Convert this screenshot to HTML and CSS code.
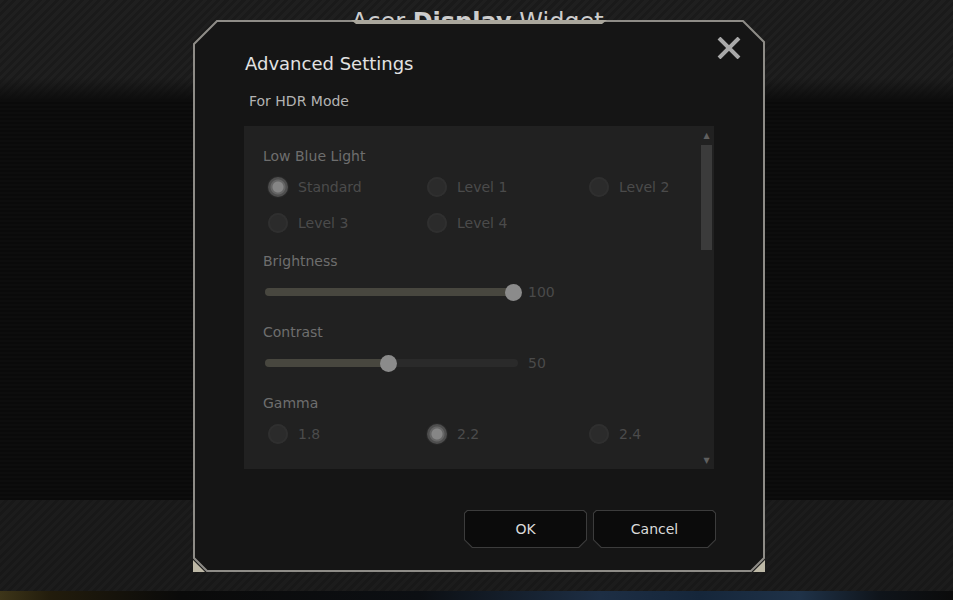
FILE: index.html
```html
<!DOCTYPE html>
<html lang="en">
<head>
<meta charset="utf-8">
<title>Acer Display Widget</title>
<link rel="stylesheet" href="styles.css">
</head>
<body>
<div class="app">
  <header class="topbar">
    <h1 class="app-title">Acer <b>Display</b> Widget</h1>
  </header>
  <main class="stage"></main>
  <div class="band"></div>
  <div class="strip"></div>

  <section class="dialog" role="dialog" aria-label="Advanced Settings">
    <svg class="dialog-frame" width="572" height="552" viewBox="0 0 572 552" aria-hidden="true">
      <polygon points="1,24 24,1 550,1 571,22 571,538 558,551 14,551 1,538" fill="#151515" stroke="#8e8c87" stroke-width="2"/>
      <polygon points="158,0 414,0 409,4 163,4" fill="#a9a69c"/>
      <polygon points="0,540 12,552 0,552" fill="#bdb8a6"/>
      <polygon points="572,540 560,552 572,552" fill="#bdb8a6"/>
    </svg>
    <button class="close" aria-label="Close">
      <svg width="24" height="22" viewBox="0 0 24 22"><path d="M2 1 L22 21 M22 1 L2 21" stroke="#a9a9a9" stroke-width="4" fill="none"/></svg>
    </button>
    <div class="dialog-body">
      <h2 class="dialog-title">Advanced Settings</h2>
      <p class="dialog-sub">For HDR Mode</p>
      <div class="panel">
        <div class="panel-content">
          <div class="group group--radio">
            <div class="group-label">Low Blue Light</div>
            <div class="radio-grid">
              <div class="option"><span class="radio is-on"></span>Standard</div>
              <div class="option"><span class="radio"></span>Level 1</div>
              <div class="option"><span class="radio"></span>Level 2</div>
              <div class="option"><span class="radio"></span>Level 3</div>
              <div class="option"><span class="radio"></span>Level 4</div>
            </div>
          </div>
          <div class="group group--slider">
            <div class="group-label">Brightness</div>
            <div class="slider-row">
              <div class="track"><div class="track-fill" style="width:248px"></div><span class="thumb" style="left:248px"></span></div>
              <span class="value">100</span>
            </div>
          </div>
          <div class="group group--slider">
            <div class="group-label">Contrast</div>
            <div class="slider-row">
              <div class="track"><div class="track-fill" style="width:123px"></div><span class="thumb" style="left:123px"></span></div>
              <span class="value">50</span>
            </div>
          </div>
          <div class="group group--radio">
            <div class="group-label">Gamma</div>
            <div class="radio-grid">
              <div class="option"><span class="radio"></span>1.8</div>
              <div class="option"><span class="radio is-on"></span>2.2</div>
              <div class="option"><span class="radio"></span>2.4</div>
            </div>
          </div>
        </div>
        <div class="scrollbar">
          <span class="scroll-arrow">&#9650;</span>
          <span class="scroll-thumb"></span>
          <span class="scroll-space"></span>
          <span class="scroll-arrow scroll-arrow--down">&#9660;</span>
        </div>
      </div>
      <div class="actions">
        <button class="btn"><span class="btn-face">OK</span></button>
        <button class="btn"><span class="btn-face">Cancel</span></button>
      </div>
    </div>
  </section>
</div>
</body>
</html>
```

FILE: styles.css
```css
* { box-sizing: border-box; margin: 0; padding: 0; }

html, body {
  width: 953px;
  height: 600px;
  overflow: hidden;
}

body {
  background: #0c0c0c;
  font-family: "DejaVu Sans", "Liberation Sans", sans-serif;
}

.app {
  position: relative;
  width: 953px;
  height: 600px;
  display: flex;
  flex-direction: column;
}

.topbar {
  height: 100px;
  flex: none;
  display: flex;
  justify-content: center;
  padding-top: 8px;
  background:
    linear-gradient(to bottom, rgba(12,12,12,0) 0, rgba(12,12,12,0) 78px, #0b0b0b 102px),
    repeating-linear-gradient(135deg, #1f1f1f 0 3px, #1a1a1a 3px 6px);
}

.app-title {
  font-size: 24px;
  line-height: 28px;
  font-weight: normal;
  color: #cdcdcd;
  margin-left: 2px;
}

.app-title b { font-weight: bold; }

.stage {
  flex: 1;
  background: repeating-linear-gradient(to bottom, #0d0d0d 0 2px, #0a0a0a 2px 4px);
}

.band {
  height: 91px;
  flex: none;
  background: repeating-linear-gradient(135deg, #1c1c1c 0 3px, #181818 3px 6px);
}

.strip {
  height: 9px;
  flex: none;
  background: linear-gradient(90deg, #3d3519 0, #221c0c 50px, #0a0a0a 180px, #0c0f13 420px, #1d2e44 600px, #15263a 700px, #1f3248 800px, #0f141a 880px, #0b0b0b 953px);
}

/* dialog overlay */
.dialog {
  position: absolute;
  left: 193px;
  top: 20px;
  width: 572px;
  height: 552px;
}

.dialog-frame {
  position: absolute;
  left: 0;
  top: 0;
}

.close {
  position: absolute;
  left: 524px;
  top: 17px;
  width: 24px;
  height: 22px;
  border: 0;
  background: transparent;
  display: flex;
}

.dialog-body {
  position: relative;
  display: flex;
  flex-direction: column;
  padding: 32px 49px 0 51px;
}

.dialog-title {
  font-size: 18px;
  line-height: 24px;
  font-weight: normal;
  color: #e2e2e2;
  margin-left: 1px;
}

.dialog-sub {
  margin-top: 16px;
  margin-left: 5px;
  font-size: 14px;
  line-height: 18px;
  color: #b3b3b3;
}

.panel {
  margin-top: 16px;
  width: 470px;
  height: 343px;
  background: #212121;
  display: flex;
}

.panel-content {
  flex: 1;
  padding: 21px 0 0 19px;
}

.group-label {
  font-size: 14px;
  line-height: 18px;
  color: #6e6e6e;
}

.group--radio + .group { margin-top: 17px; }
.group--slider + .group { margin-top: 21px; }

.radio-grid {
  margin-top: 10px;
  padding-left: 5px;
  display: grid;
  grid-template-columns: 159px 162px auto;
  row-gap: 12px;
}

.option {
  display: flex;
  align-items: center;
  gap: 10px;
  height: 24px;
  font-size: 14px;
  color: #4b4b4b;
}

.radio {
  flex: none;
  width: 20px;
  height: 20px;
  border-radius: 50%;
  background: #2b2b2b;
  box-shadow: inset 0 0 0 2px #2f2f2f;
}

.radio.is-on {
  background: radial-gradient(circle, #868686 0 5px, #666 6px 7px, #4e4e4e 8px 10px);
  box-shadow: 0 0 2px #3c3c3c;
}

.slider-row {
  margin-top: 12px;
  height: 20px;
  display: flex;
  align-items: center;
  padding-left: 2px;
}

.track {
  position: relative;
  width: 253px;
  height: 8px;
  border-radius: 4px;
  background: #2a2a2a;
}

.track-fill {
  height: 100%;
  border-radius: 4px;
  background: #48473f;
}

.thumb {
  position: absolute;
  top: 50%;
  width: 17px;
  height: 17px;
  margin: -8.5px 0 0 -8.5px;
  border-radius: 50%;
  background: #8b8b8b;
}

.value {
  margin-left: 10px;
  font-size: 14px;
  line-height: 18px;
  color: #4a4a4a;
}

.scrollbar {
  flex: none;
  width: 13px;
  margin-right: 1px;
  display: flex;
  flex-direction: column;
  align-items: center;
}

.scroll-arrow {
  height: 19px;
  display: flex;
  align-items: center;
  justify-content: center;
  font-size: 8px;
  color: #5f5f5f;
}

.scroll-arrow--down { height: 18px; }

.scroll-thumb {
  width: 11px;
  height: 105px;
  background: #3b3b3b;
}

.scroll-space { flex: 1; }

.actions {
  margin-top: 41px;
  display: flex;
  justify-content: flex-end;
  gap: 6px;
}

.btn {
  width: 123px;
  height: 38px;
  padding: 1px;
  border: 0;
  background: #3c3c3c;
  font: inherit;
  clip-path: polygon(3px 0, calc(100% - 3px) 0, 100% 3px, 100% calc(100% - 8px), calc(100% - 8px) 100%, 8px 100%, 0 calc(100% - 8px), 0 3px);
}

.btn-face {
  display: flex;
  height: 100%;
  align-items: center;
  justify-content: center;
  background: #0b0b0b;
  color: #dadada;
  font-size: 14px;
  clip-path: polygon(2.6px 0, calc(100% - 2.6px) 0, 100% 2.6px, 100% calc(100% - 7.6px), calc(100% - 7.6px) 100%, 7.6px 100%, 0 calc(100% - 7.6px), 0 2.6px);
}
```
